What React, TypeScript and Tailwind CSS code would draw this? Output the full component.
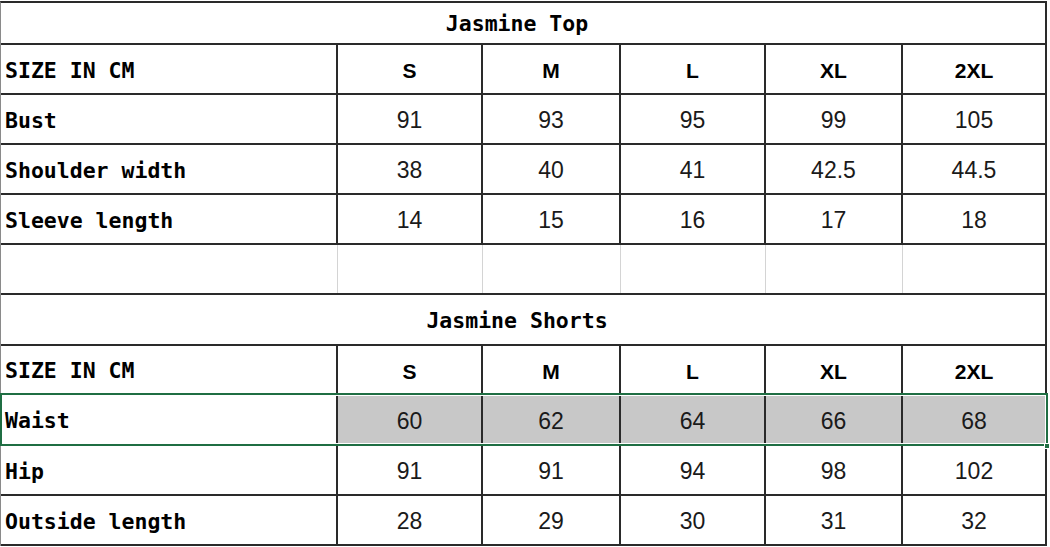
import { type JSX } from 'react'

const sizes = ['S', 'M', 'L', 'XL', '2XL']
const colW = ['w-[145px]', 'w-[138px]', 'w-[145px]', 'w-[137px]', 'w-[144px]']

const topRows = [
  { label: 'Bust', values: ['91', '93', '95', '99', '105'] },
  { label: 'Shoulder width', values: ['38', '40', '41', '42.5', '44.5'] },
  { label: 'Sleeve length', values: ['14', '15', '16', '17', '18'] }
]

const shortsRows = [
  { label: 'Hip', values: ['91', '91', '94', '98', '102'] },
  { label: 'Outside length', values: ['28', '29', '30', '31', '32'] }
]

const labelCls =
  "w-[337px] shrink-0 flex items-center pl-[4px] pt-[4px] border-r-2 border-[#2a2a2a] font-['DejaVu_Sans_Mono'] font-bold text-[21.5px] text-black"

function TitleRow({ title, h }: { title: string; h: string }): JSX.Element {
  return (
    <div
      className={`${h} flex items-center justify-center pr-[12px] pt-[3px] border-b-2 border-r-2 border-[#2a2a2a] font-['DejaVu_Sans_Mono'] font-bold text-[21.5px] text-black`}
    >
      {title}
    </div>
  )
}

function HeaderRow({ h }: { h: string }): JSX.Element {
  return (
    <div className={`${h} flex border-b-2 border-[#2a2a2a]`}>
      <div className={labelCls}>SIZE IN CM</div>
      {sizes.map((s, i) => (
        <div
          key={s}
          className={`${colW[i]} shrink-0 flex items-center justify-center pt-[4px] border-r-2 border-[#2a2a2a] font-['Liberation_Sans'] font-bold text-[21px] text-black`}
        >
          {s}
        </div>
      ))}
    </div>
  )
}

function DataRow({
  label,
  values,
  h = 'h-[50px]',
  shaded = false
}: {
  label: string
  values: string[]
  h?: string
  shaded?: boolean
}): JSX.Element {
  return (
    <div className={`${h} flex border-b-2 border-[#2a2a2a]`}>
      <div className={labelCls}>{label}</div>
      {values.map((v, i) => (
        <div
          key={i}
          className={`${colW[i]} shrink-0 flex items-center justify-center pt-[3px] border-r-2 border-[#2a2a2a] font-['Liberation_Sans'] text-[23px] text-[#1a1a1a] ${shaded ? 'bg-[#c8c8c8]' : ''}`}
        >
          {v}
        </div>
      ))}
    </div>
  )
}

export default function App(): JSX.Element {
  return (
    <div className="w-[1050px] h-[547px] bg-white overflow-hidden">
      <div className="mt-[1px] w-[1047px] border-t-2 border-l border-t-[#2a2a2a] border-l-[#8a8a8a]">
        <TitleRow title="Jasmine Top" h="h-[42px]" />
        <HeaderRow h="h-[50px]" />
        {topRows.map((r) => (
          <DataRow key={r.label} label={r.label} values={r.values} />
        ))}

        {/* blank spacer row with faint grid lines */}
        <div className="h-[50px] flex border-b-2 border-[#2a2a2a]">
          <div className="w-[337px] shrink-0 border-r border-[#d4d4d4]" />
          {colW.map((w, i) => (
            <div
              key={i}
              className={`${w} shrink-0 ${i === 4 ? 'border-r-2 border-[#2a2a2a]' : 'border-r border-[#d4d4d4]'}`}
            />
          ))}
        </div>

        <TitleRow title="Jasmine Shorts" h="h-[51px]" />
        <HeaderRow h="h-[49px]" />

        <div className="relative">
          <DataRow label="Waist" values={['60', '62', '64', '66', '68']} h="h-[51px]" shaded />
          {/* selection outline */}
          <div className="absolute -top-[2px] -left-[1px] -right-[1px] bottom-0 border-2 border-[#1f6e43] shadow-[inset_0_0_0_1px_#ffffff] pointer-events-none" />
          <div className="absolute -right-[3px] -bottom-[3px] w-[6px] h-[6px] bg-[#1f6e43] border border-white" />
        </div>

        {shortsRows.map((r) => (
          <DataRow key={r.label} label={r.label} values={r.values} />
        ))}
      </div>
    </div>
  )
}
